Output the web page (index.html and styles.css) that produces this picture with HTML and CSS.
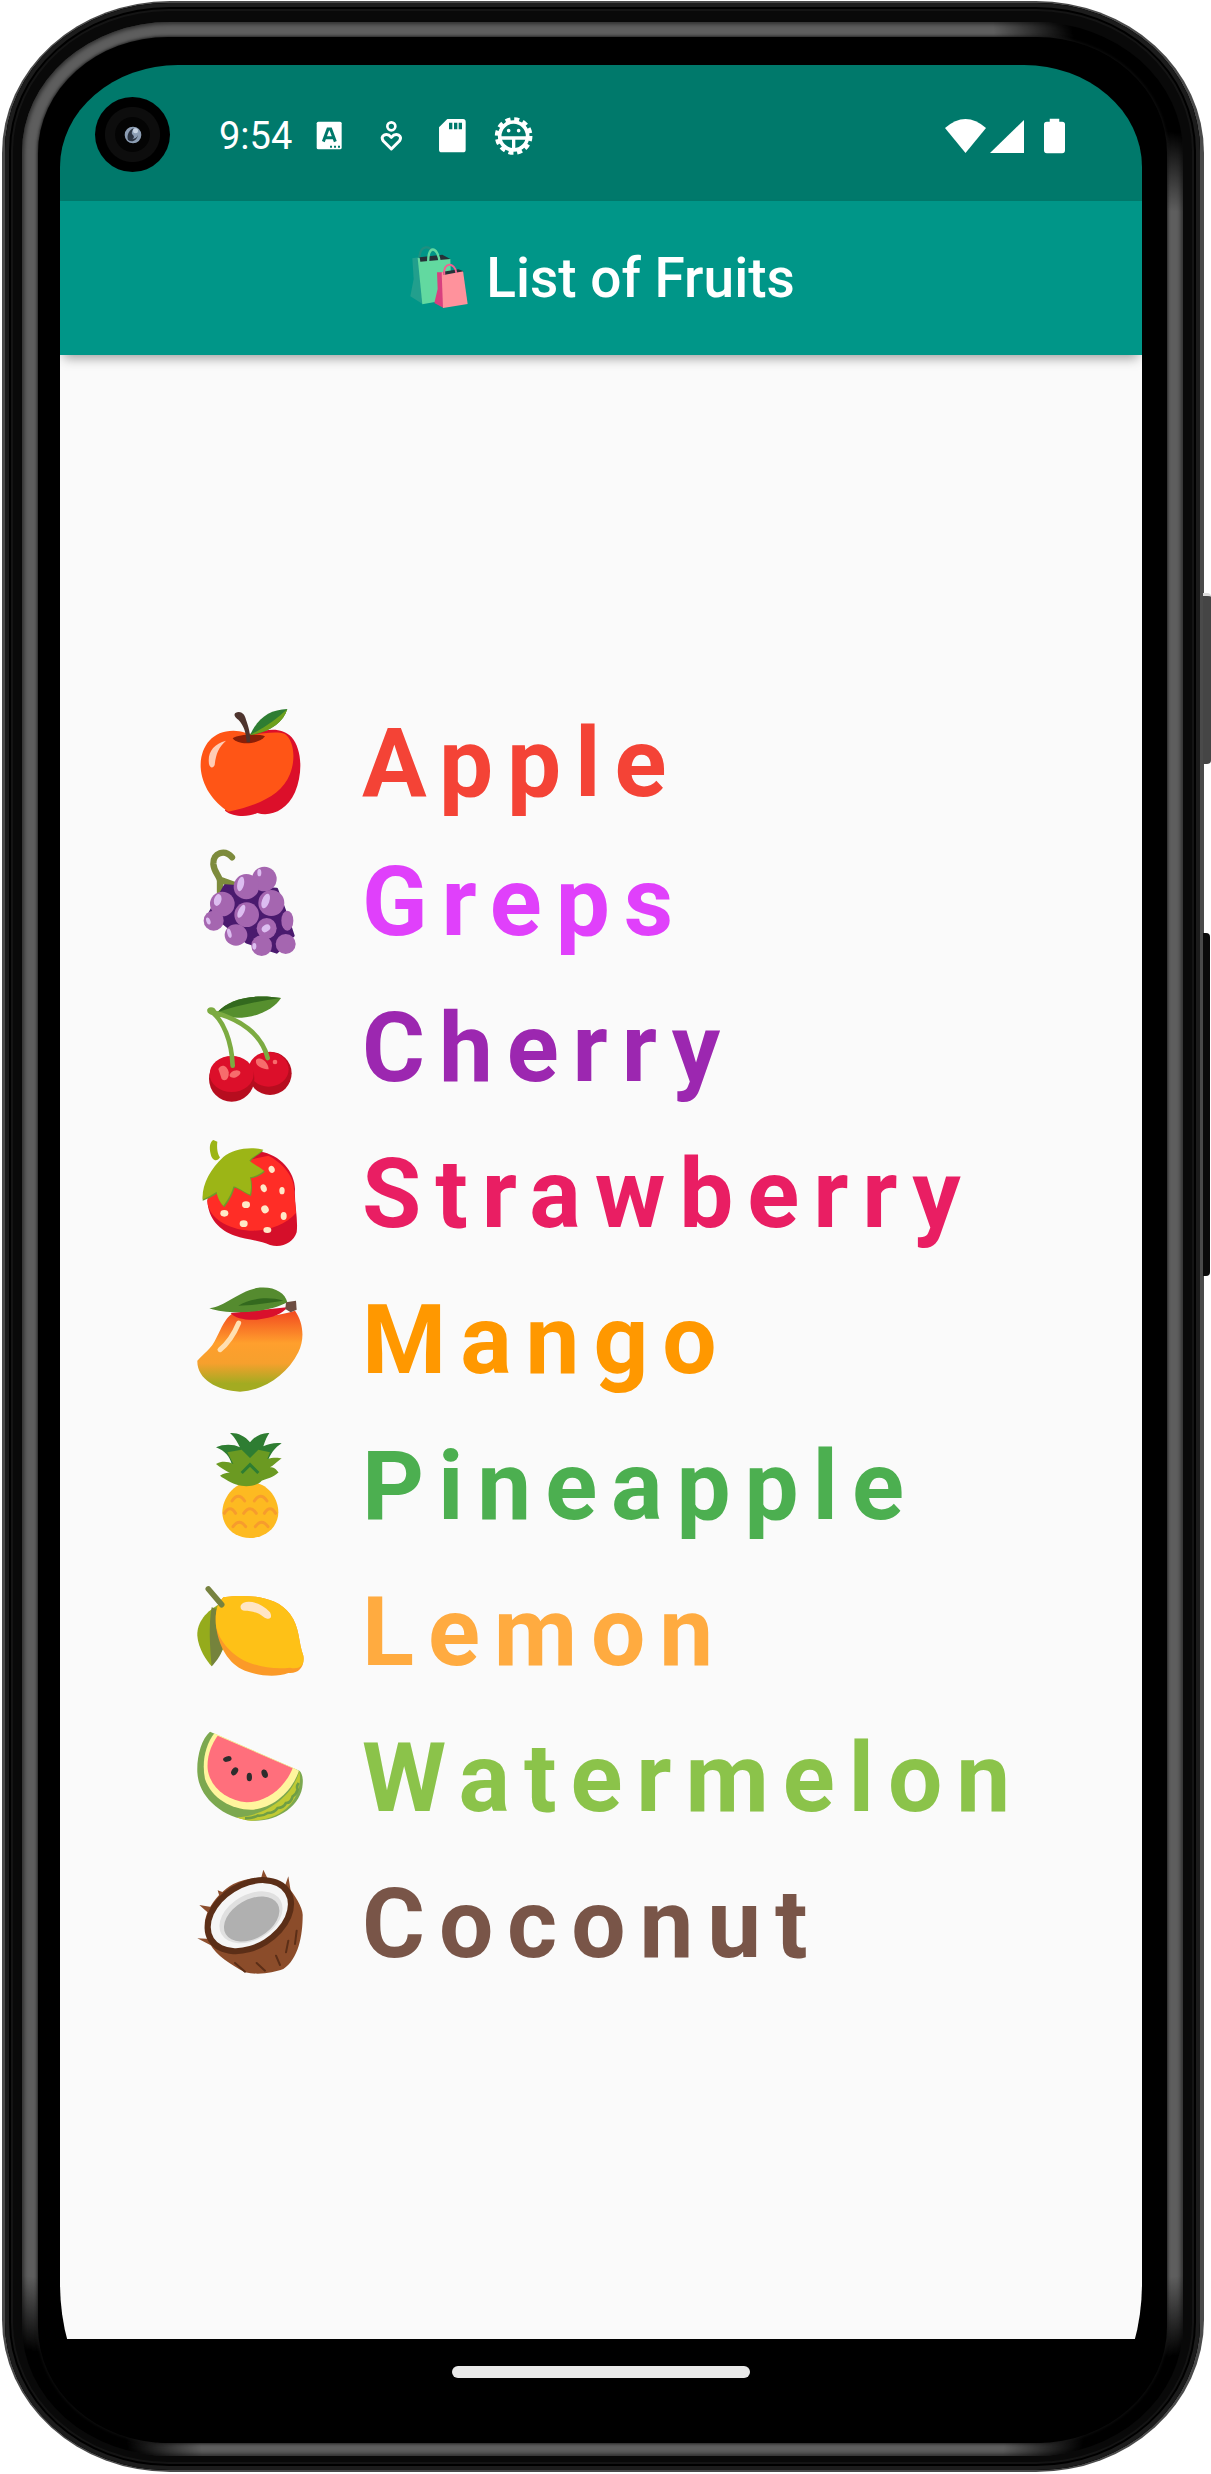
FILE: index.html
```html
<!DOCTYPE html>
<html lang="en">
<head>
<meta charset="utf-8">
<title>List of Fruits</title>
<link rel="stylesheet" href="styles.css">
</head>
<body>
<div class="phone">
  <span class="btn btn-power"></span>
  <span class="btn btn-volume"></span>
  <div class="shell">
    <div class="shell-inner">
      <div class="band">
        <div class="bezel">
          <main class="display">
            <span class="camera">
              <svg class="camera-lens" viewBox="0 0 24 24"><circle cx="12" cy="12" r="10" fill="#8c9db3"/><path d="M6 18C4 12 8 5 13 4c-3 4-3 7-1 8 2 2 1 4-1 5 3 0 6-2 7-5-1 6-7 10-12 6Z" fill="#2b3340"/><circle cx="15" cy="7" r="3" fill="#c7d3e2"/></svg>
            </span>
            <header class="status">
              <span class="time">9:54</span>
              <span class="slot"><svg class="i-a" viewBox="48 50 80 88"><rect x="50" y="52" width="75" height="83" rx="5" fill="#fff"/><path d="M70 112 84 74h8l14 38M75 100h26" fill="none" stroke="#00796b" stroke-width="9"/><path d="M90 124h6v6h-6zM102 124h6v6h-6zM114 124h6v6h-6z" fill="#00796b"/></svg></span>
              <span class="slot"><svg class="i-h" viewBox="236 48 68 90"><circle cx="270" cy="64" r="12" fill="none" stroke="#fff" stroke-width="8"/><path d="M270 132 246 108C234 92 256 80 270 97 284 80 306 92 294 108Z" fill="none" stroke="#fff" stroke-width="9" stroke-linejoin="round"/></svg></span>
              <span class="slot"><svg class="i-s" viewBox="412 40 86 106"><path d="M440 43H487a8 8 0 0 1 8 8V135a8 8 0 0 1-8 8H423a8 8 0 0 1-8-8V68Z" fill="#fff"/><path d="M445 54h10v20h-10zM460 54h10v20h-10zM474 54h10v20h-10z" fill="#00796b"/></svg></span>
              <span class="slot"><svg class="i-g" viewBox="578 36 118 114"><circle cx="637" cy="93" r="50" fill="none" stroke="#fff" stroke-width="13" stroke-dasharray="15 11.2"/><circle cx="637" cy="93" r="42" fill="none" stroke="#fff" stroke-width="11"/><path d="M597 99H677M637 99V134" fill="none" stroke="#fff" stroke-width="10"/><circle cx="622" cy="77" r="5.5" fill="#fff"/><circle cx="652" cy="77" r="5.5" fill="#fff"/></svg></span>
              <span class="status-right">
                <svg class="i-wifi" viewBox="0 0 41 34"><path d="M0 9Q20.5-9 41 9L20.5 34Z" fill="#fff"/></svg>
                <svg class="i-signal" viewBox="0 0 34 33"><path d="M0 33 34 0V33Z" fill="#fff"/></svg>
                <svg class="i-batt" viewBox="0 0 22 36"><path d="M6 0h10v3h3a3 3 0 0 1 3 3v27a3 3 0 0 1-3 3H3a3 3 0 0 1-3-3V6a3 3 0 0 1 3-3h3Z" fill="#fff"/></svg>
              </span>
            </header>
            <div class="appbar">
              <svg class="bag" viewBox="0 0 240 228">
                <path d="M55 55C58 18 90 18 92 40" fill="none" stroke="#1f8f80" stroke-width="7"/>
                <path d="M34 58 54 55 66 196 28 172 38 120Z" fill="#229f8d"/>
                <path d="M50 57 148 60 152 180 64 196Z" fill="#62d9a0"/>
                <path d="M56 55 124 47 148 60 58 68Z" fill="#263238"/>
                <path d="M82 74C78 18 110 18 116 70" fill="none" stroke="#62d9a0" stroke-width="7"/>
                <path d="M108 100 127 100 128 207 100 192 110 150Z" fill="#d8407f"/>
                <path d="M122 100 186 96 200 195 126 207Z" fill="#ff929c"/>
                <path d="M126 98 172 91 188 97 128 108Z" fill="#263238"/>
                <path d="M130 108C124 68 162 68 166 102" fill="none" stroke="#f06292" stroke-width="6"/>
              </svg>
              <h1 class="title">List of Fruits</h1>
            </div>
            <section class="content">
              <div class="row">
                <svg class="emoji" viewBox="60 42 360 360">
                  <path d="M240 135C280 125 330 108 365 145 395 180 400 250 375 310 350 365 300 385 262 372 235 385 190 385 165 365Z" fill="#dc0f2a"/>
                  <path d="M92 235C90 175 125 125 190 125 215 125 235 135 250 135 280 135 320 125 345 135 372 155 378 210 360 255 335 320 260 350 175 368 130 340 95 290 92 235Z" fill="#ff5516"/>
                  <path d="M188 148C210 134 265 134 285 142 270 165 205 172 188 148Z" fill="#8a1f08"/>
                  <path d="M196 72C210 64 224 72 228 92 236 115 242 135 240 160H230C228 130 222 110 205 92 196 86 190 78 196 72Z" fill="#4e342e"/>
                  <path d="M240 138C265 85 300 62 352 60 340 100 300 130 240 138Z" fill="#2e7d32"/>
                  <path d="M240 138C290 112 320 90 352 60 340 100 300 130 240 138Z" fill="#6da01c"/>
                  <path d="M117 225C112 190 130 165 168 155 145 175 138 195 134 228 130 238 120 238 117 225Z" fill="#ffccb5"/>
                </svg>
                <span class="name c-apple">Apple</span>
              </div>
              <div class="row">
                <svg class="emoji" viewBox="60 480 360 360">
                  <path d="M186 505C165 480 128 490 130 525 132 550 148 560 150 575V615M150 572 200 590" fill="none" stroke="#7d8b3c" stroke-width="19" stroke-linecap="round"/>
                  <path d="M165 590 320 600 350 680 370 740 320 790 230 760 120 670Z" fill="#4a1a6e" stroke="#4a1a6e" stroke-width="8" stroke-linejoin="round"/>
                  <g fill="#a566b0">
                    <circle cx="283" cy="570" r="37"/><circle cx="229" cy="593" r="38"/><circle cx="157" cy="645" r="37"/><circle cx="304" cy="642" r="39"/><circle cx="230" cy="677" r="37"/><circle cx="131" cy="695" r="30"/><ellipse cx="198" cy="738" rx="34" ry="32"/><ellipse cx="290" cy="718" rx="30" ry="31"/><circle cx="275" cy="770" r="31"/><circle cx="347" cy="765" r="30"/><ellipse cx="352" cy="695" rx="18" ry="30"/>
                  </g>
                  <g fill="#dcbdf0">
                    <ellipse cx="268" cy="551" rx="6" ry="11"/><ellipse cx="212" cy="585" rx="10" ry="22" transform="rotate(12 212 585)"/><ellipse cx="143" cy="633" rx="11" ry="18" transform="rotate(15 143 633)"/><ellipse cx="287" cy="636" rx="11" ry="23" transform="rotate(20 287 636)"/><ellipse cx="214" cy="667" rx="9" ry="21" transform="rotate(25 214 667)"/><ellipse cx="115" cy="696" rx="6" ry="11" transform="rotate(-20 115 696)"/><ellipse cx="178" cy="733" rx="6" ry="14" transform="rotate(-15 178 733)"/><ellipse cx="288" cy="718" rx="14" ry="10" transform="rotate(-35 288 718)"/><ellipse cx="253" cy="772" rx="6" ry="10"/>
                  </g>
                </svg>
                <span class="name c-grapes">Greps</span>
              </div>
              <div class="row">
                <svg class="emoji" viewBox="0 33 360 360">
                  <circle cx="240" cy="268" r="65" fill="#b70d1f"/>
                  <ellipse cx="236" cy="256" rx="60" ry="52" fill="#dc0f2a"/>
                  <circle cx="125" cy="285" r="68" fill="#b70d1f"/>
                  <ellipse cx="125" cy="270" rx="66" ry="54" fill="#dc0f2a"/>
                  <path d="M85 255C95 238 112 245 116 265 118 285 105 295 95 285Z" fill="#f76c6c"/>
                  <ellipse cx="135" cy="270" rx="17" ry="10" transform="rotate(-20 135 270)" fill="#f76c6c"/>
                  <path d="M198 228C212 215 235 235 236 256 220 256 194 247 198 228Z" fill="#f76c6c"/>
                  <circle cx="255" cy="234" r="7" fill="#f76c6c"/>
                  <path d="M82 85C120 40 200 30 273 42 250 80 180 112 110 98Z" fill="#568f2e"/>
                  <path d="M82 85C120 40 200 30 273 42 210 50 140 65 82 85Z" fill="#33691e"/>
                  <path d="M64 82C100 110 125 170 128 245M70 85C150 105 215 150 233 222" fill="none" stroke="#7cab41" stroke-width="14" stroke-linecap="round"/>
                  <ellipse cx="65" cy="81" rx="14" ry="11" transform="rotate(20 65 81)" fill="#7cab41"/>
                </svg>
                <span class="name c-cherry">Cherry</span>
              </div>
              <div class="row">
                <svg class="emoji" viewBox="60 156 360 360">
                  <path d="M112 335C125 270 190 205 270 188 330 195 375 250 375 300 372 340 385 390 380 430 370 462 335 478 300 468 270 455 225 450 195 440 150 425 115 390 112 335Z" fill="#d50f2a"/>
                  <path d="M112 335C125 285 190 225 250 210L295 200C335 220 372 260 372 300L378 372C350 405 300 425 250 425 190 425 115 395 112 335Z" fill="#ff2d26"/>
                  <path d="M162 208C190 183 240 175 280 185 265 198 245 208 241 218 250 228 272 238 285 248 265 265 243 268 243 268 248 288 246 308 243 321 223 313 198 293 193 298 188 318 173 343 163 355 151 343 143 323 143 313 128 323 108 333 98 335 98 293 123 243 163 208Z" fill="#6e9a2c"/>
                  <path d="M130 153C120 158 117 175 122 195 125 212 140 222 150 205 142 195 140 175 142 158Z" fill="#9cb516"/>
                  <path d="M160 204C188 180 240 172 280 182 265 195 245 205 238 215 250 225 270 235 282 245 262 262 240 265 240 265 245 285 243 305 240 316 220 308 195 288 190 293 185 313 170 338 160 350 148 338 140 318 140 308 125 318 105 328 98 331 95 290 120 240 160 204Z" fill="#9cb516"/>
                  <g fill="#ffe9c8">
                    <ellipse cx="305" cy="241" rx="9" ry="11" transform="rotate(-20 305 241)"/><ellipse cx="281" cy="298" rx="9" ry="12" transform="rotate(-20 281 298)"/><ellipse cx="336" cy="305" rx="8" ry="11"/><ellipse cx="228" cy="347" rx="12" ry="10"/><ellipse cx="285" cy="361" rx="11" ry="12" transform="rotate(-30 285 361)"/><ellipse cx="341" cy="381" rx="9" ry="12"/><ellipse cx="163" cy="373" rx="12" ry="10"/><ellipse cx="221" cy="404" rx="12" ry="10"/><ellipse cx="292" cy="423" rx="12" ry="9"/>
                  </g>
                </svg>
                <span class="name c-straw">Strawberry</span>
              </div>
              <div class="row">
                <svg class="emoji" viewBox="60 594 360 360">
                  <defs>
                    <linearGradient id="mango" x1="0" y1="0" x2="0" y2="1">
                      <stop offset="0" stop-color="#f2481f"/><stop offset=".4" stop-color="#ff9f2d"/><stop offset=".65" stop-color="#f6a02d"/><stop offset=".9" stop-color="#a3ab21"/><stop offset="1" stop-color="#a3ab21"/>
                    </linearGradient>
                  </defs>
                  <path d="M185 675C250 690 330 680 375 665 400 700 405 750 385 790 350 860 280 905 210 908 140 905 80 870 82 815 100 795 125 780 140 745 155 715 165 690 185 675Z" fill="url(#mango)"/>
                  <path d="M182 672 350 655C345 670 310 688 260 692 225 694 195 688 182 672Z" fill="#d9102c"/>
                  <path d="M118 658C170 650 200 610 260 597 310 590 345 610 352 640 300 670 180 680 118 658Z" fill="#558b2f"/>
                  <path d="M205 650C240 630 290 620 340 635 300 640 250 650 205 650Z" fill="#33691e"/>
                  <path d="M348 640 378 635 380 662 362 670 346 660Z" fill="#6d4c41"/>
                  <path d="M206 702C192 735 172 765 150 782" fill="none" stroke="#ffe0b2" stroke-width="15" stroke-linecap="round"/>
                </svg>
                <span class="name c-mango">Mango</span>
              </div>
              <div class="row">
                <svg class="emoji" viewBox="60 1032 360 360">
                  <path d="M240 1180C295 1180 325 1230 325 1270 325 1315 285 1347 240 1347 195 1347 157 1315 157 1270 157 1230 190 1180 240 1180Z" fill="#fdba21"/>
                  <path d="M186 1236Q205 1208 224 1236M253 1236Q272 1208 291 1236M163 1273Q180 1246 197 1273M221 1273Q240 1245 259 1273M283 1273Q300 1246 317 1273M189 1313Q208 1286 227 1313M256 1313Q275 1286 294 1313" fill="none" stroke="#f79c2d" stroke-width="9" stroke-linecap="round"/>
                  <path d="M240 1060C225 1040 200 1030 180 1032 195 1045 205 1065 210 1075 190 1065 160 1065 138 1075 165 1085 180 1105 185 1125L240 1140 290 1125C300 1095 315 1075 335 1063 315 1060 295 1065 280 1072 285 1055 292 1040 298 1032 275 1030 250 1045 240 1060Z" fill="#2e7d32"/>
                  <path d="M138 1125C155 1115 175 1118 190 1125L172 1090 215 1082 240 1107 265 1082 300 1090 292 1110C305 1105 325 1105 335 1108 320 1120 310 1130 300 1135 315 1132 322 1148 326 1150 310 1165 290 1170 275 1175 265 1190 215 1205 165 1170 158 1166 152 1162 150 1160 165 1150 175 1150 180 1152 165 1145 150 1135 138 1125Z" fill="#6b9a22"/>
                  <path d="M215 1152 240 1127 265 1152" fill="none" stroke="#2e7d32" stroke-width="9"/>
                </svg>
                <span class="name c-pine">Pineapple</span>
              </div>
              <div class="row">
                <svg class="emoji" viewBox="60 120 360 360">
                  <path d="M150 195C110 215 80 250 82 290 85 330 110 365 125 382L160 330Z" fill="#95ab1c"/>
                  <path d="M125 205C115 260 120 330 125 382 140 365 160 340 158 320L140 210Z" fill="#75833c"/>
                  <path d="M160 175C230 165 320 170 360 225 390 265 385 310 400 350 405 385 385 405 355 402 320 415 270 412 225 395 175 375 145 320 138 260 135 225 140 195 160 175Z" fill="#fb9a28"/>
                  <path d="M160 175C230 165 320 170 360 225 390 265 385 310 400 350 405 380 388 392 360 386 320 392 270 385 230 368 180 345 145 300 138 260 135 225 140 195 160 175Z" fill="#fec117"/>
                  <path d="M212 200C220 180 270 185 300 220 310 240 295 245 280 233 265 220 240 215 225 215 215 215 210 210 212 200Z" fill="#ffe5c4"/>
                  <path d="M115 150 155 197" fill="none" stroke="#77823f" stroke-width="17" stroke-linecap="round"/>
                </svg>
                <span class="name c-lemon">Lemon</span>
              </div>
              <div class="row">
                <svg class="emoji" viewBox="60 558 360 360">
                  <path d="M120 578C95 600 80 650 82 700 85 770 150 835 245 845 320 850 395 800 398 735 400 715 395 700 388 695Z" fill="#7ca84f"/>
                  <path d="M388 695C400 760 360 840 245 845 230 845 215 842 200 835 290 830 370 770 388 695Z" fill="#c0ca33"/>
                  <path d="M386 732q-8 10-3 20q-5 15-15 20q-5 20-20 20q-8 15-25 15q-10 15-30 15q-15 10-30 8q-15 8-38 8" fill="none" stroke="#6f9e45" stroke-width="8"/>
                  <path d="M133 583C105 620 95 670 105 720 125 780 190 815 250 812 310 805 365 760 387 695L372 688 145 588Z" fill="#fff59d"/>
                  <path d="M143 590 368 688C345 745 290 790 230 790 170 785 120 745 113 690 110 650 125 615 143 590Z" fill="#ff6f7c"/>
                  <g fill="#2d2d2d">
                    <ellipse cx="172" cy="660" rx="13" ry="8" transform="rotate(-15 172 660)"/><ellipse cx="194" cy="697" rx="9" ry="13" transform="rotate(35 194 697)"/><ellipse cx="238" cy="714" rx="8" ry="13"/><ellipse cx="284" cy="704" rx="9" ry="13" transform="rotate(-20 284 704)"/>
                  </g>
                </svg>
                <span class="name c-water">Watermelon</span>
              </div>
              <div class="row">
                <svg class="emoji" viewBox="60 996 360 360">
                  <path d="M280 992 296 1025 272 1022ZM355 1012 362 1055 345 1040ZM143 1054 165 1062 150 1078ZM88 1098 128 1105 115 1122ZM82 1198 122 1200 125 1220Z" fill="#8d4e2d"/>
                  <path d="M105 1165C100 1130 130 1070 190 1035 240 1010 310 1010 350 1040 375 1065 400 1110 398 1130 398 1190 385 1260 340 1290 310 1300 270 1310 225 1300 180 1275 140 1250 120 1215Z" fill="#8b4c2a"/>
                  <ellipse cx="238" cy="1130" rx="145" ry="102" transform="rotate(-32 238 1130)" fill="#5b2e17"/>
                  <ellipse cx="238" cy="1130" rx="126" ry="84" transform="rotate(-32 238 1130)" fill="#f5f5f5"/>
                  <ellipse cx="243" cy="1135" rx="102" ry="68" transform="rotate(-30 243 1135)" fill="#e0e0e0"/>
                  <ellipse cx="245" cy="1140" rx="90" ry="58" transform="rotate(-30 245 1140)" fill="#b0b0b0"/>
                  <path d="M380 1175 375 1215M355 1205 348 1240M318 1250 330 1278M260 1272 285 1295M195 1272 225 1298" fill="none" stroke="#5b2e17" stroke-width="6" stroke-linecap="round"/>
                </svg>
                <span class="name c-coco">Coconut</span>
              </div>
            </section>
            <nav class="navbar"><span class="pill"></span></nav>
          </main>
        </div>
      </div>
    </div>
  </div>
</div>
</body>
</html>
```

FILE: styles.css
```css
* { box-sizing: border-box; }
html, body { margin: 0; background: #fff; }
body { width: 1211px; height: 2474px; overflow: hidden; font-family: Roboto, "Liberation Sans", sans-serif; }

.phone { position: relative; display: flex; width: 1202px; height: 2471px; margin: 1px 7px 2px 2px; }

.shell { flex: 1; display: flex; padding: 2px 4px 2px 3px; background: #4a4a4a; border-radius: 168px / 152px; }
.shell-inner { flex: 1; display: flex; padding: 19px 17px 14px 17px; background: #090909; border-radius: 164px / 148px; box-shadow: inset 0 0 0 4px #1c1c1c, inset 0 0 0 6px #000, inset 0 0 0 8px #141414; }
.band {
  flex: 1; display: flex; padding: 15px 16px 13px 16px; border-radius: 148px / 130px;
  background:
    radial-gradient(circle at 100% 0, #000 0 110px, transparent 190px),
    radial-gradient(circle at 0 100%, #000 0 105px, transparent 180px),
    radial-gradient(circle at 100% 100%, #000 0 100px, transparent 180px),
    #5e5e5e;
  box-shadow: inset 0 0 4px 2px rgba(0, 0, 0, .55);
}
.bezel { flex: 1; display: flex; padding: 28px 25px 0 22px; background: #000; border-radius: 130px / 116px; box-shadow: 0 0 3px 1px rgba(20, 20, 20, .8); }

.display {
  position: relative; flex: 1; display: flex; flex-direction: column; overflow: hidden; background: #000;
  border-radius: 118px 118px 110px 110px / 102px 102px 160px 160px;
}

.btn { position: absolute; right: -7px; width: 8px; border-radius: 0 4px 4px 0; }
.btn-power { top: 592px; height: 171px; background: #454545; border-top: 3px solid #ddd; }
.btn-volume { top: 932px; height: 343px; width: 7px; right: -6px; background: #0a0a0a; }

.camera {
  position: absolute; left: 35px; top: 32px; width: 75px; height: 75px; border-radius: 50%; display: flex; align-items: center; justify-content: center; z-index: 3;
  background: radial-gradient(circle, #040404 0 17px, #0d0d0d 18px 27px, #000 28px);
}
.camera-lens { width: 20px; height: 22px; }

.status { flex: none; display: flex; align-items: center; height: 136px; padding: 6px 77px 0 159px; background: #00796b; }
.time { width: 80px; font-size: 38px; font-weight: 400; color: #fff; line-height: 44px; }
.slot { width: 61.3px; display: flex; align-items: center; justify-content: center; }
.i-a { width: 26.7px; height: 29.3px; }
.i-h { width: 22.7px; height: 30px; }
.i-s { width: 28.7px; height: 35.3px; }
.i-g { width: 39.3px; height: 38px; }
.status-right { margin-left: auto; display: flex; align-items: center; }
.i-wifi { width: 41px; height: 34px; }
.i-signal { width: 34px; height: 33px; margin-left: 4px; }
.i-batt { width: 21px; height: 36px; margin-left: 20px; }

.appbar { position: relative; z-index: 2; flex: none; display: flex; align-items: center; justify-content: center; height: 154px; padding-right: 6px; background: #009688; box-shadow: 0 7px 11px -4px rgba(0, 0, 0, .38); }
.bag { width: 80px; height: 76px; margin-top: -3px; }
.title { margin: 0 0 0 5px; font-size: 55px; font-weight: 500; line-height: 64px; color: #fff; }

.content { flex: 1; display: flex; flex-direction: column; justify-content: center; padding-left: 130px; background: #fafafa; }
.row { display: flex; align-items: center; height: 146px; }
.row + .row .name { padding-bottom: 15px; }
.emoji { flex: none; width: 120px; height: 120px; overflow: visible; }
.name { margin-left: 52px; font-size: 96.25px; font-weight: 700; line-height: 146px; letter-spacing: 13.9px; white-space: nowrap; }

.c-apple { color: #f44336; }
.c-grapes { color: #e040fb; }
.c-cherry { color: #9c27b0; }
.c-straw { color: #e91e63; }
.c-mango { color: #ff9800; }
.c-pine { color: #4caf50; }
.c-lemon { color: #ffab40; }
.c-water { color: #8bc34a; }
.c-coco { color: #795548; }

.navbar { flex: none; height: 104px; display: flex; justify-content: center; padding-top: 27px; background: #000; }
.pill { width: 298px; height: 12px; border-radius: 6px; background: #e9e9e9; }
```
